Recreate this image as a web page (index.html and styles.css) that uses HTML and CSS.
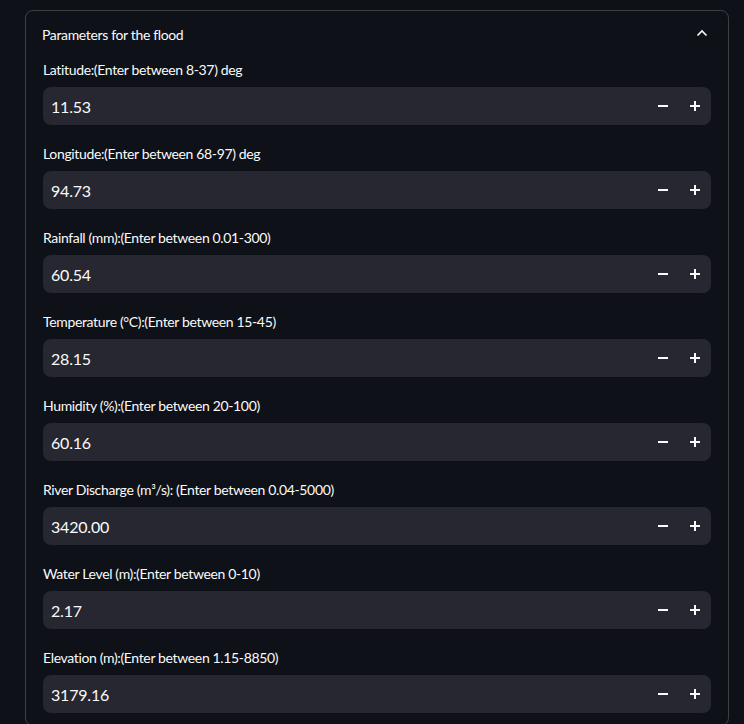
FILE: index.html
```html
<!DOCTYPE html>
<html>
<head>
<meta charset="utf-8">
<link rel="stylesheet" href="styles.css">
</head>
<body>
<div class="expander">
  <div class="exp-header">
    <span class="exp-title">Parameters for the flood</span>
    <svg class="chev" width="12" height="8" viewBox="0 0 12 8"><path d="M1.5 6.5 L6 2 L10.5 6.5" fill="none" stroke="#fafafa" stroke-width="1.6"/></svg>
  </div>
  <div class="exp-body">
    <div class="field"><label class="lbl">Latitude:(Enter between 8-37) deg</label><div class="num"><span class="val">11.53</span><span class="btn"><svg width="10" height="10" viewBox="0 0 10 10"><path d="M0 5H10" stroke="#fafafa" stroke-width="2"/></svg></span><span class="btn"><svg width="10" height="10" viewBox="0 0 10 10"><path d="M0 5H10M5 0V10" stroke="#fafafa" stroke-width="2"/></svg></span></div></div>
    <div class="field"><label class="lbl">Longitude:(Enter between 68-97) deg</label><div class="num"><span class="val">94.73</span><span class="btn"><svg width="10" height="10" viewBox="0 0 10 10"><path d="M0 5H10" stroke="#fafafa" stroke-width="2"/></svg></span><span class="btn"><svg width="10" height="10" viewBox="0 0 10 10"><path d="M0 5H10M5 0V10" stroke="#fafafa" stroke-width="2"/></svg></span></div></div>
    <div class="field"><label class="lbl">Rainfall (mm):(Enter between 0.01-300)</label><div class="num"><span class="val">60.54</span><span class="btn"><svg width="10" height="10" viewBox="0 0 10 10"><path d="M0 5H10" stroke="#fafafa" stroke-width="2"/></svg></span><span class="btn"><svg width="10" height="10" viewBox="0 0 10 10"><path d="M0 5H10M5 0V10" stroke="#fafafa" stroke-width="2"/></svg></span></div></div>
    <div class="field"><label class="lbl">Temperature (°C):(Enter between 15-45)</label><div class="num"><span class="val">28.15</span><span class="btn"><svg width="10" height="10" viewBox="0 0 10 10"><path d="M0 5H10" stroke="#fafafa" stroke-width="2"/></svg></span><span class="btn"><svg width="10" height="10" viewBox="0 0 10 10"><path d="M0 5H10M5 0V10" stroke="#fafafa" stroke-width="2"/></svg></span></div></div>
    <div class="field"><label class="lbl">Humidity (%):(Enter between 20-100)</label><div class="num"><span class="val">60.16</span><span class="btn"><svg width="10" height="10" viewBox="0 0 10 10"><path d="M0 5H10" stroke="#fafafa" stroke-width="2"/></svg></span><span class="btn"><svg width="10" height="10" viewBox="0 0 10 10"><path d="M0 5H10M5 0V10" stroke="#fafafa" stroke-width="2"/></svg></span></div></div>
    <div class="field"><label class="lbl">River Discharge (m³/s): (Enter between 0.04-5000)</label><div class="num"><span class="val">3420.00</span><span class="btn"><svg width="10" height="10" viewBox="0 0 10 10"><path d="M0 5H10" stroke="#fafafa" stroke-width="2"/></svg></span><span class="btn"><svg width="10" height="10" viewBox="0 0 10 10"><path d="M0 5H10M5 0V10" stroke="#fafafa" stroke-width="2"/></svg></span></div></div>
    <div class="field"><label class="lbl">Water Level (m):(Enter between 0-10)</label><div class="num"><span class="val">2.17</span><span class="btn"><svg width="10" height="10" viewBox="0 0 10 10"><path d="M0 5H10" stroke="#fafafa" stroke-width="2"/></svg></span><span class="btn"><svg width="10" height="10" viewBox="0 0 10 10"><path d="M0 5H10M5 0V10" stroke="#fafafa" stroke-width="2"/></svg></span></div></div>
    <div class="field"><label class="lbl">Elevation (m):(Enter between 1.15-8850)</label><div class="num"><span class="val">3179.16</span><span class="btn"><svg width="10" height="10" viewBox="0 0 10 10"><path d="M0 5H10" stroke="#fafafa" stroke-width="2"/></svg></span><span class="btn"><svg width="10" height="10" viewBox="0 0 10 10"><path d="M0 5H10M5 0V10" stroke="#fafafa" stroke-width="2"/></svg></span></div></div>
  </div>
</div>
</body>
</html>
```
FILE: styles.css
```css
html, body {
  margin: 0;
  padding: 0;
  background: #0e1117;
  color: #fafafa;
  font-family: "Lato", "Noto Sans", sans-serif;
  letter-spacing: -0.35px;
}
body {
  padding: 10px 15px 0 25px;
  height: 724px;
  overflow: hidden;
  box-sizing: border-box;
}
.expander {
  width: 704px;
  box-sizing: border-box;
  border: 1px solid rgba(250, 250, 250, 0.2);
  border-radius: 8px;
  padding-bottom: 12px;
}
.exp-header {
  height: 48px;
  display: flex;
  align-items: center;
  justify-content: space-between;
  padding: 0 20px 0 16px;
  font-size: 14px;
}
.exp-title {
  margin-top: -2px;
}
.chev {
  display: block;
  margin-top: -4px;
}
.exp-body {
  padding: 0 17px;
  display: flex;
  flex-direction: column;
  gap: 18px;
}
.field {
  display: flex;
  flex-direction: column;
}
.lbl {
  font-size: 14px;
  line-height: 20px;
  height: 19px;
  padding-top: 1px;
  margin-bottom: 8px;
  overflow: visible;
}
.num {
  height: 38px;
  background: #262730;
  border-radius: 8px;
  display: flex;
  align-items: center;
  padding-left: 8px;
}
.val {
  flex: 1;
  font-size: 16px;
  letter-spacing: -0.2px;
}
.btn {
  width: 32px;
  height: 38px;
  display: flex;
  align-items: center;
  justify-content: center;
}
.btn svg { display: block; }
```
